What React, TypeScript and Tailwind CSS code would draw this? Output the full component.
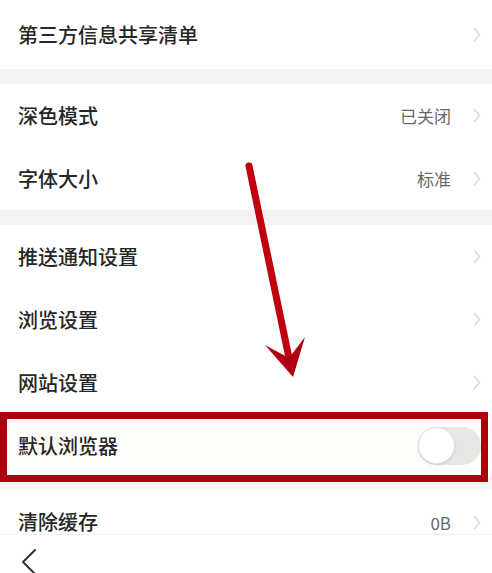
import React from "react";

const Chevron = () => (
  <svg width="8" height="15" viewBox="0 0 8 15" className="shrink-0">
    <path d="M1.5 1.5 L6.5 7.5 L1.5 13.5" fill="none" stroke="#d8d8d8" strokeWidth="1.5" strokeLinecap="round" strokeLinejoin="round" />
  </svg>
);

type RowProps = { label: string; value?: string; h?: string; chevron?: boolean };

const Row = ({ label, value, h = "h-[63px]", chevron = true }: RowProps) => (
  <div className={`${h} flex items-center pl-[18px] pr-[11px] bg-white`}>
    <span className="text-[20px] leading-none font-medium text-[#262626] flex-1">{label}</span>
    {value && <span className="text-[17px] leading-none text-[#676767] mr-[22px]">{value}</span>}
    {chevron && <Chevron />}
  </div>
);

export default function App() {
  return (
    <div
      className="relative w-[492px] h-[573px] overflow-hidden bg-white"
      style={{ fontFamily: '"Noto Sans CJK SC", "Noto Sans", sans-serif' }}
    >
      <Row label="第三方信息共享清单" h="h-[69px]" />
      <div className="h-[15px] bg-[#f3f3f3]" />
      <Row label="深色模式" value="已关闭" />
      <Row label="字体大小" value="标准" />
      <div className="h-[15px] bg-[#f3f3f3]" />
      <Row label="推送通知设置" />
      <Row label="浏览设置" />
      <Row label="网站设置" />
      <div className="h-[63px] flex items-center pl-[18px] pr-[11px] bg-[#fffdf9]">
        <span className="text-[20px] leading-none font-medium text-[#262626] flex-1">默认浏览器</span>
        <div className="w-[63px] h-[38px] rounded-full bg-[#e6e8e6] flex items-center">
          <div className="w-[37px] h-[37px] rounded-full bg-white border border-[#e2e2e2] shadow-sm" />
        </div>
      </div>
      <div className="h-[13px] bg-[#f7f7f7]" />
      <div className="h-[44px] flex items-center pt-[20px] pl-[18px] pr-[11px] bg-white">
        <span className="text-[20px] leading-none font-medium text-[#262626] flex-1">清除缓存</span>
        <span className="text-[17px] leading-none text-[#676767] mr-[22px]">0B</span>
        <Chevron />
      </div>
      <div className="h-[39px] bg-white border-t border-[#f0f0f0] pl-[21px] pt-[14px]">
        <svg width="16" height="26" viewBox="0 0 16 26">
          <path d="M14 1 L2 13 L14 25" fill="none" stroke="#333" strokeWidth="2" strokeLinecap="round" strokeLinejoin="round" />
        </svg>
      </div>

      {/* annotation box */}
      <div className="absolute left-0 top-[412px] w-[488px] h-[70px] border-[7px] border-[#ac000d]" />

      {/* annotation arrow */}
      <svg className="absolute inset-0 pointer-events-none" width="492" height="573" viewBox="0 0 492 573">
        <line x1="249" y1="166" x2="289" y2="358" stroke="#c0000f" strokeWidth="7" strokeLinecap="round" />
        <polygon points="265,345 289,358 305,337 293,377" fill="#b0000f" />
      </svg>
    </div>
  );
}
